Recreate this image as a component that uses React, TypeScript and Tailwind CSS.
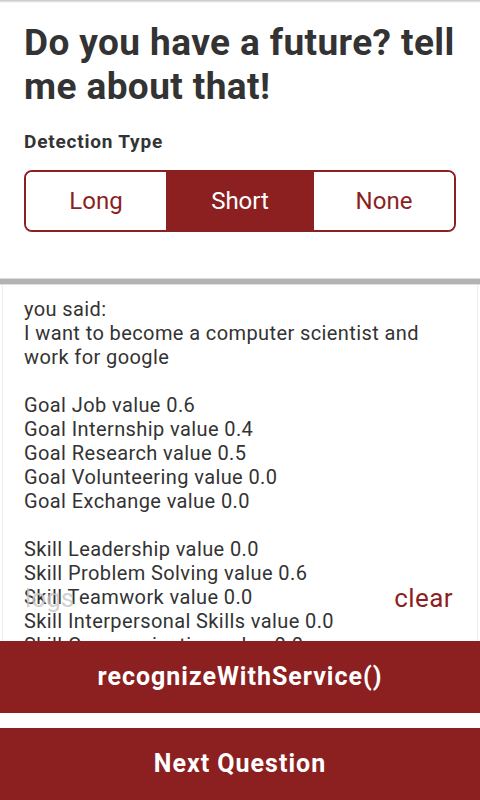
import React, { useState } from 'react';

const logLines = [
  'you said:',
  'I want to become a computer scientist and work for google',
  '',
  'Goal Job value 0.6',
  'Goal Internship value 0.4',
  'Goal Research value 0.5',
  'Goal Volunteering value 0.0',
  'Goal Exchange value 0.0',
  '',
  'Skill Leadership value 0.0',
  'Skill Problem Solving value 0.6',
  'Skill Teamwork value 0.0',
  'Skill Interpersonal Skills value 0.0',
  'Skill Communication value 0.0',
  'Skill Technical value 0.7',
];

const types = ['Long', 'Short', 'None'];

const App: React.FC = () => {
  const [detection, setDetection] = useState<string>('Short');

  return (
    <div className="flex h-[800px] w-full flex-col overflow-hidden bg-white font-['Roboto',sans-serif] text-[#333]">
      <div className="h-[3px] bg-gradient-to-b from-[#c4c4c4] to-white" />

      <div className="px-6 pt-[18px]">
        <h1 className="-mr-2 text-[37px] font-bold leading-[44px] tracking-[0.4px]">
          Do you have a future? tell me about that!
        </h1>
        <p className="mt-[21px] text-[19px] font-bold leading-[24px] tracking-[0.8px]">Detection Type</p>
        <div className="mt-[16px] flex h-[62px] overflow-hidden rounded-lg border-2 border-[#8c1f1f]">
          {types.map((t) => (
            <button
              key={t}
              onClick={() => setDetection(t)}
              className={
                (t === 'Short' ? 'w-[148px] shrink-0 ' : 'flex-1 ') +
                (detection === t
                  ? 'bg-[#8c1f1f] text-[24px] text-white'
                  : 'bg-white text-[24px] text-[#8c1f1f]')
              }
            >
              {t}
            </button>
          ))}
        </div>
      </div>

      <div className="mt-[46px] flex flex-col">
        <div className="h-px bg-[#dcdcdc]" />
        <div className="h-[5px] bg-[#b3b3b3]" />
        <div className="h-px bg-[#e0e0e0]" />
      </div>

      <div className="relative mx-[2px] flex-1 overflow-hidden border-x border-[#eeeeee] pl-[21px] pr-[21px] pt-[12px]">
        {logLines.map((line, i) => (
          <p key={i} className="min-h-[24px] text-[20px] leading-[24px] tracking-[0.4px]">
            {line}
          </p>
        ))}
        <span className="absolute left-[22px] top-[298px] text-[26px] leading-[30px] text-[#c8c8c8] opacity-80">
          logs
        </span>
        <button className="absolute right-[24px] top-[298px] text-[26px] leading-[30px] tracking-[0.4px] text-[#8c1f1f]">
          clear
        </button>
      </div>

      <button className="h-[72px] w-full shrink-0 bg-[#8c1f1f] text-[25px] font-bold tracking-[1px] text-white">
        recognizeWithService()
      </button>
      <div className="h-[15px] shrink-0" />
      <button className="h-[72px] w-full shrink-0 bg-[#8c1f1f] text-[25px] font-bold tracking-[1px] text-white">
        Next Question
      </button>
    </div>
  );
};

export default App;
